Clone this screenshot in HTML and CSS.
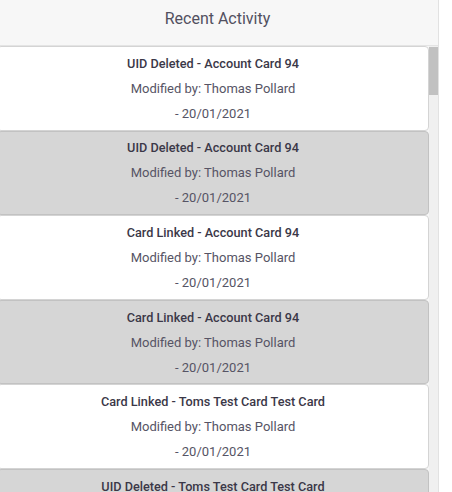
FILE: index.html
```html
<!DOCTYPE html>
<html>
<head>
<meta charset="utf-8">
<link rel="stylesheet" href="styles.css">
</head>
<body>
<div class="panel">
  <div class="panel-header">Recent Activity</div>
  <div class="panel-body">
    <div class="activity-list">
      <div class="activity"><p class="activity-title">UID Deleted - Account Card 94</p><p class="activity-line">Modified by: Thomas Pollard</p><p class="activity-line">- 20/01/2021</p></div>
      <div class="activity"><p class="activity-title">UID Deleted - Account Card 94</p><p class="activity-line">Modified by: Thomas Pollard</p><p class="activity-line">- 20/01/2021</p></div>
      <div class="activity"><p class="activity-title">Card Linked - Account Card 94</p><p class="activity-line">Modified by: Thomas Pollard</p><p class="activity-line">- 20/01/2021</p></div>
      <div class="activity"><p class="activity-title">Card Linked - Account Card 94</p><p class="activity-line">Modified by: Thomas Pollard</p><p class="activity-line">- 20/01/2021</p></div>
      <div class="activity"><p class="activity-title">Card Linked - Toms Test Card Test Card</p><p class="activity-line">Modified by: Thomas Pollard</p><p class="activity-line">- 20/01/2021</p></div>
      <div class="activity"><p class="activity-title">UID Deleted - Toms Test Card Test Card</p><p class="activity-line">Modified by: Thomas Pollard</p><p class="activity-line">- 20/01/2021</p></div>
    </div>
    <div class="scrollbar"><div class="scrollbar-thumb"></div></div>
  </div>
</div>
</body>
</html>
```

FILE: styles.css
```css
html, body {
  margin: 0;
  padding: 0;
  background: #ffffff;
  font-family: Roboto, "Liberation Sans", sans-serif;
  overflow: hidden;
}
.panel {
  margin-left: -3px;
  width: 442px;
  height: 492px;
  display: flex;
  flex-direction: column;
  border-right: 1px solid #e2e2e2;
  box-sizing: border-box;
  background: #f7f7f7;
}
.panel-header {
  height: 46px;
  flex: none;
  display: flex;
  align-items: center;
  justify-content: center;
  font-size: 16px;
  color: #525060;
  border-bottom: 1px solid #e4e4e4;
  box-sizing: border-box;
  padding-bottom: 8px;
}
.panel-body {
  flex: 1;
  min-height: 0;
  display: flex;
}
.activity-list {
  flex: 1;
  min-width: 0;
  overflow: hidden;
  background: #f7f7f7;
}
.scrollbar {
  flex: none;
  width: 9px;
  background: #f0f0f0;
  padding-top: 1px;
}
.scrollbar-thumb {
  height: 48px;
  background: #c1c1c1;
}
.activity {
  background: #ffffff;
  border: 1px solid #d4d4d4;
  border-radius: 4px;
  padding: 3.8px 0;
  text-align: center;
}
.activity:nth-child(even) {
  background: #d6d6d6;
  border-color: #c2c2c2;
}
.activity p {
  margin: 0;
  line-height: 25px;
  white-space: nowrap;
}
.activity-title {
  font-size: 12.7px;
  font-weight: 500;
  color: #3b3848;
}
.activity-line {
  font-size: 13px;
  color: #565465;
}
```
